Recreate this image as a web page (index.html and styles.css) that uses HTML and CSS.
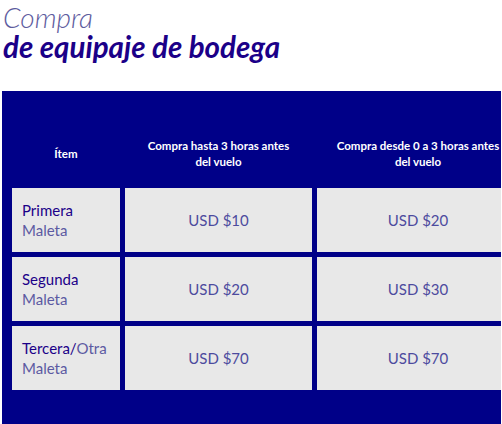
FILE: index.html
```html
<!DOCTYPE html>
<html lang="es">
<head>
<meta charset="utf-8">
<link rel="stylesheet" href="styles.css">
</head>
<body>
<h1 class="title"><span class="title-light">Compra</span><span class="title-bold">de equipaje de bodega</span></h1>
<div class="box">
  <div class="grid">
    <div class="head">Ítem</div>
    <div class="head">Compra hasta 3 horas antes<br>del vuelo</div>
    <div class="head">Compra desde 0 a 3 horas antes<br>del vuelo</div>

    <div class="cell item"><span class="strong">Primera</span><span class="soft">Maleta</span></div>
    <div class="cell price">USD $10</div>
    <div class="cell price">USD $20</div>

    <div class="cell item"><span class="strong">Segunda</span><span class="soft">Maleta</span></div>
    <div class="cell price">USD $20</div>
    <div class="cell price">USD $30</div>

    <div class="cell item"><span><span class="strong-inline">Tercera/</span><span class="soft-inline">Otra</span></span><span class="soft">Maleta</span></div>
    <div class="cell price">USD $70</div>
    <div class="cell price">USD $70</div>
  </div>
</div>
</body>
</html>
```
FILE: styles.css
```css
html, body {
  margin: 0;
  padding: 0;
  background: #ffffff;
  overflow: hidden;
}
body {
  width: 502px;
  height: 424px;
  font-family: Lato, "Open Sans", sans-serif;
}
.title {
  margin: 0;
  padding: 2px 0 0 3px;
  font-style: italic;
  line-height: 30px;
  height: 89px;
  box-sizing: border-box;
}
.title-light {
  display: block;
  font-size: 28px;
  font-weight: 300;
  color: #5e5c9e;
}
.title-bold {
  display: block;
  font-size: 29.5px;
  font-weight: 700;
  color: #1b0088;
}
.box {
  margin-left: 2px;
  margin-top: 2px;
  width: 499px;
  height: 340px;
  background: #000088;
  overflow: hidden;
}
.grid {
  display: grid;
  grid-template-columns: 108px 187px 202px;
  grid-template-rows: 92px 64px 64px 64px;
  column-gap: 5px;
  row-gap: 5px;
  padding-left: 10px;
}
.head {
  color: #ffffff;
  font-size: 11.5px;
  font-weight: 700;
  line-height: 16px;
  text-align: center;
  display: flex;
  align-items: center;
  justify-content: center;
  padding-top: 34px;
  white-space: nowrap;
}
.cell {
  background: #e8e8e8;
  display: flex;
}
.item {
  flex-direction: column;
  justify-content: center;
  padding-left: 10px;
  font-size: 15px;
  line-height: 20px;
}
.strong, .strong-inline {
  color: #1b0088;
}
.strong {
  display: block;
}
.soft {
  display: block;
  color: #5c5aa2;
}
.soft-inline {
  color: #5c5aa2;
}
.price {
  align-items: center;
  justify-content: center;
  font-size: 15px;
  color: #4d4b9e;
}
```
